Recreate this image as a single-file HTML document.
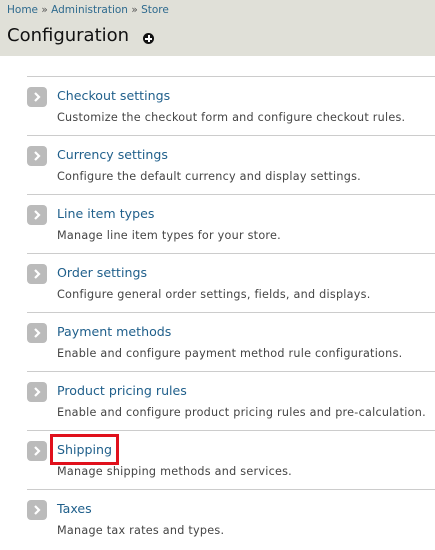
<html><head><style>
body{margin:0;width:435px;height:550px;background:#fff;font-family:"DejaVu Sans",sans-serif;position:relative;overflow:hidden}
.hd{position:absolute;left:0;top:0;width:435px;height:56px;background:#e0e0d8}
.bc{position:absolute;left:7px;top:4px;font-size:10.5px;color:#2e6a8e}
.bc span{color:#555}
h1{position:absolute;left:7px;top:25px;margin:0;font-weight:normal;font-size:18px;color:#111}
.plus{position:absolute;left:143px;top:33px;width:11px;height:11px;border-radius:50%;background:#111}
.plus:before{content:"";position:absolute;left:2px;top:4.5px;width:7px;height:2px;background:#fff}
.plus:after{content:"";position:absolute;left:4.5px;top:2px;width:2px;height:7px;background:#fff}
.line{position:absolute;left:27px;width:408px;height:1px;background:#ccc}
.row{position:absolute;left:0;width:435px}
.ic{position:absolute;left:27px;top:11px;width:20px;height:20px;border-radius:4px;background:#bbb}
.ic svg{position:absolute;left:0;top:0}
.t{position:absolute;left:57px;top:12px;font-size:12.6px;color:#1f5f8b;white-space:nowrap}
.d{position:absolute;left:57px;top:35px;font-size:11.2px;letter-spacing:0.25px;color:#444;white-space:nowrap}
.red{position:absolute;left:50px;top:434px;width:63px;height:25px;border:3px solid #e0101c}
</style></head><body>
<div class="hd"></div>
<div class="bc">Home <span>»</span> Administration <span>»</span> Store</div>
<h1>Configuration</h1><div class="plus"></div>
<div class="line" style="top:76px"></div>
<div class="row" style="top:76px"><div class="ic"><svg width="20" height="20"><path d="M8 6l4 4-4 4" stroke="#fff" stroke-width="2.2" fill="none"/></svg></div><div class="t">Checkout settings</div><div class="d">Customize the checkout form and configure checkout rules.</div></div>
<div class="line" style="top:135px"></div>
<div class="row" style="top:135px"><div class="ic"><svg width="20" height="20"><path d="M8 6l4 4-4 4" stroke="#fff" stroke-width="2.2" fill="none"/></svg></div><div class="t">Currency settings</div><div class="d">Configure the default currency and display settings.</div></div>
<div class="line" style="top:194px"></div>
<div class="row" style="top:194px"><div class="ic"><svg width="20" height="20"><path d="M8 6l4 4-4 4" stroke="#fff" stroke-width="2.2" fill="none"/></svg></div><div class="t">Line item types</div><div class="d">Manage line item types for your store.</div></div>
<div class="line" style="top:253px"></div>
<div class="row" style="top:253px"><div class="ic"><svg width="20" height="20"><path d="M8 6l4 4-4 4" stroke="#fff" stroke-width="2.2" fill="none"/></svg></div><div class="t">Order settings</div><div class="d">Configure general order settings, fields, and displays.</div></div>
<div class="line" style="top:312px"></div>
<div class="row" style="top:312px"><div class="ic"><svg width="20" height="20"><path d="M8 6l4 4-4 4" stroke="#fff" stroke-width="2.2" fill="none"/></svg></div><div class="t">Payment methods</div><div class="d">Enable and configure payment method rule configurations.</div></div>
<div class="line" style="top:371px"></div>
<div class="row" style="top:371px"><div class="ic"><svg width="20" height="20"><path d="M8 6l4 4-4 4" stroke="#fff" stroke-width="2.2" fill="none"/></svg></div><div class="t">Product pricing rules</div><div class="d">Enable and configure product pricing rules and pre-calculation.</div></div>
<div class="line" style="top:430px"></div>
<div class="row" style="top:430px"><div class="ic"><svg width="20" height="20"><path d="M8 6l4 4-4 4" stroke="#fff" stroke-width="2.2" fill="none"/></svg></div><div class="t">Shipping</div><div class="d">Manage shipping methods and services.</div></div>
<div class="line" style="top:489px"></div>
<div class="row" style="top:489px"><div class="ic"><svg width="20" height="20"><path d="M8 6l4 4-4 4" stroke="#fff" stroke-width="2.2" fill="none"/></svg></div><div class="t">Taxes</div><div class="d">Manage tax rates and types.</div></div>
<div class="red"></div>
</body></html>
